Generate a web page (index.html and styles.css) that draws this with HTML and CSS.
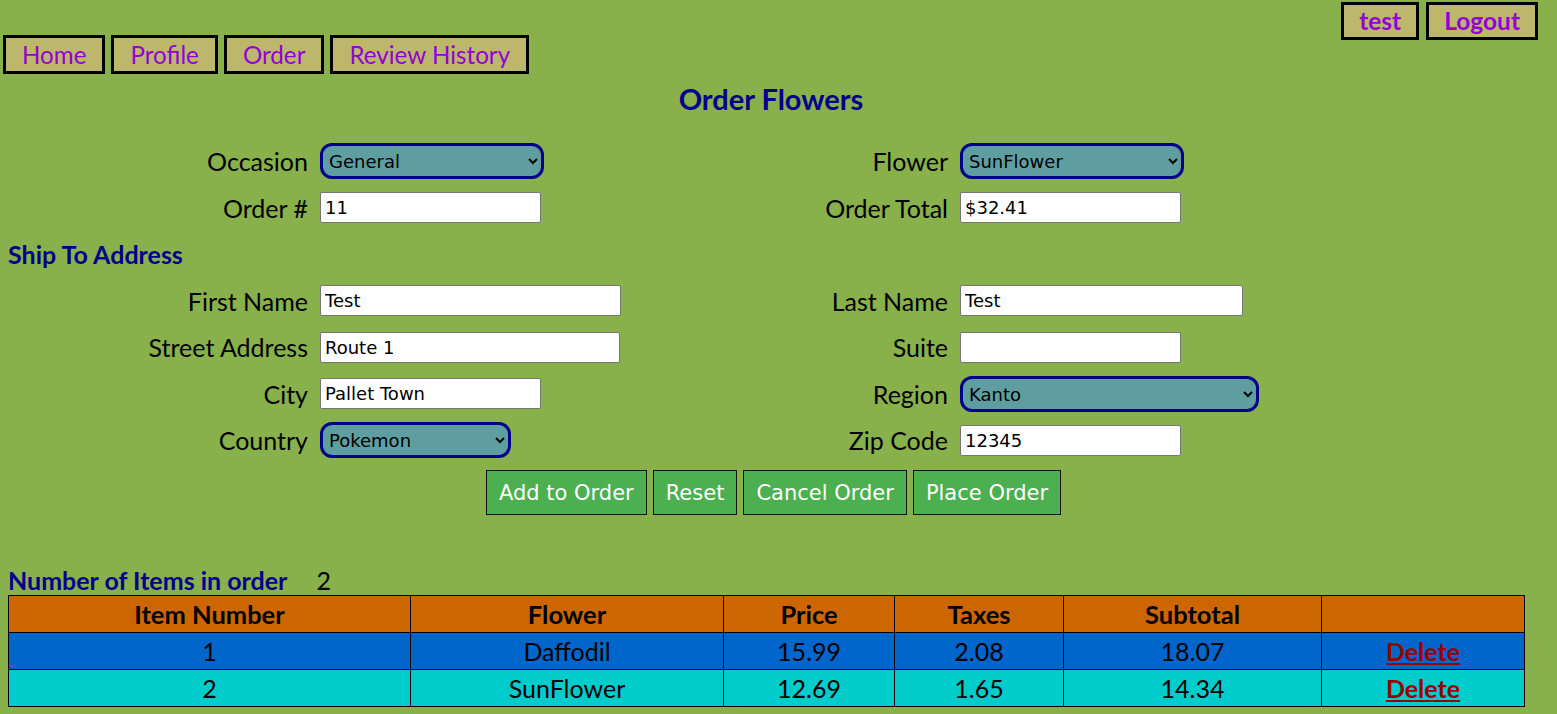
FILE: index.html
```html
<!DOCTYPE html>
<html lang="en">
<head>
<meta charset="utf-8">
<title>Order Flowers</title>
<link rel="stylesheet" href="styles.css">
</head>
<body>
<div class="topbar">
  <a class="userbtn" href="#">test</a>
  <a class="userbtn" href="#">Logout</a>
</div>
<nav class="nav">
  <a class="navbtn" href="#">Home</a>
  <a class="navbtn" href="#">Profile</a>
  <a class="navbtn" href="#">Order</a>
  <a class="navbtn" href="#">Review History</a>
</nav>
<main class="content">
  <h2 class="title">Order Flowers</h2>
  <form class="order-form">
    <label class="lbl">Occasion</label>
    <div class="fld"><select class="sel w224"><option>General</option></select></div>
    <label class="lbl">Flower</label>
    <div class="fld"><select class="sel w224"><option>SunFlower</option></select></div>

    <label class="lbl">Order #</label>
    <div class="fld"><input class="txt w221" type="text" value="11"></div>
    <label class="lbl">Order Total</label>
    <div class="fld"><input class="txt w221" type="text" value="$32.41"></div>

    <div class="section">Ship To Address</div>

    <label class="lbl">First Name</label>
    <div class="fld"><input class="txt w301" type="text" value="Test"></div>
    <label class="lbl">Last Name</label>
    <div class="fld"><input class="txt w283" type="text" value="Test"></div>

    <label class="lbl">Street Address</label>
    <div class="fld"><input class="txt w300" type="text" value="Route 1"></div>
    <label class="lbl">Suite</label>
    <div class="fld"><input class="txt w221" type="text" value=""></div>

    <label class="lbl">City</label>
    <div class="fld"><input class="txt w221" type="text" value="Pallet Town"></div>
    <label class="lbl">Region</label>
    <div class="fld"><select class="sel w299"><option>Kanto</option></select></div>

    <label class="lbl">Country</label>
    <div class="fld"><select class="sel w191"><option>Pokemon</option></select></div>
    <label class="lbl">Zip Code</label>
    <div class="fld"><input class="txt w221" type="text" value="12345"></div>

    <div class="actions">
      <button class="act" type="button">Add to Order</button>
      <button class="act" type="button">Reset</button>
      <button class="act" type="button">Cancel Order</button>
      <button class="act" type="button">Place Order</button>
    </div>
  </form>

  <div class="count">
    <span class="count-lbl">Number of Items in order</span>
    <span class="count-num">2</span>
  </div>
  <table class="items">
    <colgroup>
      <col class="c1"><col class="c2"><col class="c3"><col class="c4"><col class="c5"><col class="c6">
    </colgroup>
    <thead>
      <tr class="head"><th>Item Number</th><th>Flower</th><th>Price</th><th>Taxes</th><th>Subtotal</th><th></th></tr>
    </thead>
    <tbody>
      <tr class="r1"><td>1</td><td>Daffodil</td><td>15.99</td><td>2.08</td><td>18.07</td><td><a class="del" href="#">Delete</a></td></tr>
      <tr class="r2"><td>2</td><td>SunFlower</td><td>12.69</td><td>1.65</td><td>14.34</td><td><a class="del" href="#">Delete</a></td></tr>
    </tbody>
  </table>
</main>
</body>
</html>
```

FILE: styles.css
```css
html, body {
  margin: 0;
  padding: 0;
}
body {
  background: #88B04B;
  font-family: "Lato", "Liberation Sans", sans-serif;
  font-size: 25px;
  color: #000;
  height: 714px;
  overflow: hidden;
}

.topbar {
  display: flex;
  justify-content: flex-end;
  gap: 7px;
  padding: 2px 19px 0 0;
  height: 33px;
}
.userbtn {
  display: block;
  box-sizing: border-box;
  height: 38px;
  line-height: 32px;
  padding: 0 15px;
  border: 3px solid #000;
  background: #BDB76B;
  color: #9400D3;
  font-weight: bold;
  font-size: 24.5px;
  text-decoration: none;
}

.nav {
  display: flex;
  gap: 6px;
  padding-left: 3px;
}
.navbtn {
  display: block;
  box-sizing: border-box;
  height: 39px;
  line-height: 33px;
  padding: 0 16px;
  border: 3px solid #000;
  background: #BDB76B;
  color: #9400D3;
  font-size: 24.2px;
  text-decoration: none;
}

.content {
  width: 1526px;
  margin-left: 8px;
}
.title {
  margin: 7px 0 21px;
  text-align: center;
  color: #00008B;
  font-size: 29px;
  line-height: 36px;
  font-weight: bold;
}

.order-form {
  display: grid;
  grid-template-columns: 312px 328px 312px auto;
  grid-auto-rows: 46.5px;
  align-items: center;
}
.lbl {
  text-align: right;
  padding-right: 12px;
  font-size: 25px;
  line-height: 30px;
}
.fld {
  display: flex;
  align-items: center;
}
.section {
  grid-column: 1 / -1;
  color: #00008B;
  font-weight: bold;
  font-size: 25px;
  line-height: 30px;
}
.txt {
  box-sizing: border-box;
  height: 31px;
  border: 1px solid #767676;
  border-radius: 2px;
  padding: 0 4px;
  background: #fff;
  font-family: "DejaVu Sans", sans-serif;
  font-size: 18px;
  color: #000;
}
.sel {
  box-sizing: border-box;
  height: 36px;
  border: 3px solid #00008B;
  border-radius: 12px;
  padding: 1px 2px 0 2px;
  background-color: #5F9EA0;
  font-family: "DejaVu Sans", sans-serif;
  font-size: 18px;
  color: #000;
}
.w191 { width: 191px; }
.w221 { width: 221px; }
.w224 { width: 224px; }
.w283 { width: 283px; }
.w299 { width: 299px; }
.w300 { width: 300px; }
.w301 { width: 301px; }

.actions {
  grid-column: 1 / -1;
  align-self: stretch;
  height: 58px;
  display: flex;
  justify-content: center;
  align-items: center;
  gap: 6px;
  padding-left: 5px;
}
.act {
  box-sizing: border-box;
  height: 45px;
  padding: 0 12px;
  border: 1px solid #111;
  background: #4CAF50;
  color: #fff;
  font-family: "DejaVu Sans", sans-serif;
  font-size: 21px;
}

.count {
  margin-top: 55px;
  display: flex;
  gap: 29px;
  line-height: 30px;
  height: 30px;
}
.count-lbl {
  color: #00008B;
  font-weight: bold;
  font-size: 25px;
}
.count-num {
  font-size: 25px;
}

.items {
  border-collapse: collapse;
  table-layout: fixed;
  width: 1516px;
  border: 1px solid #000;
}
.c1 { width: 402px; }
.c2 { width: 313px; }
.c3 { width: 171px; }
.c4 { width: 169px; }
.c5 { width: 258px; }
.c6 { width: 203px; }
.items th, .items td {
  border: 1px solid #000;
  height: 36px;
  padding: 0;
  text-align: center;
  font-size: 25px;
  line-height: 36px;
}
.items th { font-weight: bold; font-size: 25.5px; }
.head { background: #CC6600; }
.r1 { background: #0066CC; }
.r2 { background: #00CCCC; }
.del {
  color: #990000;
  font-weight: bold;
  text-decoration: underline;
}
```
